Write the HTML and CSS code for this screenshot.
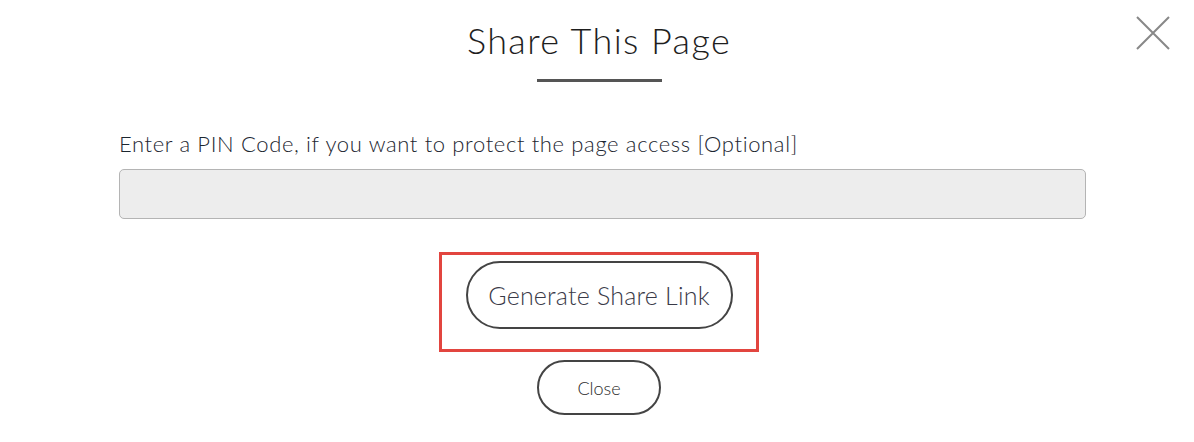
FILE: index.html
```html
<!DOCTYPE html>
<html>
<head>
<meta charset="utf-8">
<link rel="stylesheet" href="styles.css">
</head>
<body>
<div class="modal">
  <button class="close-x" aria-label="Close">
    <svg width="34" height="34" viewBox="0 0 34 34"><path d="M1 1 L33 33 M33 1 L1 33" stroke="#888" stroke-width="2" fill="none"/></svg>
  </button>
  <h1 class="title">Share This Page</h1>
  <div class="title-rule"></div>
  <div class="field">
    <label class="label" for="pin">Enter a PIN Code, if you want to protect the page access [Optional]</label>
    <input class="pin-input" id="pin" type="text">
  </div>
  <div class="highlight">
    <button class="btn btn-generate">Generate Share Link</button>
  </div>
  <button class="btn btn-close">Close</button>
</div>
</body>
</html>
```
FILE: styles.css
```css
* { box-sizing: border-box; }
html, body { margin: 0; padding: 0; background: #fff; }
body { font-family: Lato, "Open Sans", sans-serif; color: #333; }
.modal {
  position: relative;
  width: 1194px;
  height: 442px;
  display: flex;
  flex-direction: column;
  align-items: center;
  padding-left: 4px;
}
.close-x {
  position: absolute;
  top: 16px;
  left: 1136px;
  width: 34px;
  height: 34px;
  padding: 0;
  border: 0;
  background: none;
  cursor: pointer;
}
.close-x svg { display: block; }
.title {
  margin: 17px 0 0;
  font-size: 36px;
  line-height: 46px;
  font-weight: 300;
  letter-spacing: 1.4px;
  color: #1e1e1e;
}
.title-rule {
  width: 125px;
  height: 3px;
  background: #555;
  margin-top: 16px;
}
.field {
  align-self: flex-start;
  margin-left: 115px;
  width: 967px;
  margin-top: 48px;
  display: flex;
  flex-direction: column;
}
.label {
  font-size: 22px;
  line-height: 28px;
  font-weight: 300;
  letter-spacing: 0.64px;
  color: #1c2630;
}
.pin-input {
  margin-top: 11px;
  height: 50px;
  width: 967px;
  border: 1px solid #b4b4b4;
  border-radius: 5px;
  background: #ededed;
}
.highlight {
  margin-top: 33px;
  width: 320px;
  height: 100px;
  border: 3px solid #e2453f;
  display: flex;
  justify-content: center;
  align-items: flex-start;
  padding-top: 6px;
}
.btn {
  font-family: Lato, "Open Sans", sans-serif;
  background: #fff;
  border: 2px solid #444;
  border-radius: 40px;
  color: #3a3a48;
  cursor: pointer;
  font-weight: 300;
}
.btn-generate {
  width: 267px;
  height: 68px;
  font-size: 25px;
  letter-spacing: 0.2px;
}
.btn-close {
  margin-top: 8px;
  width: 124px;
  height: 55px;
  font-size: 18px;
  color: #2a2a2a;
}
```
